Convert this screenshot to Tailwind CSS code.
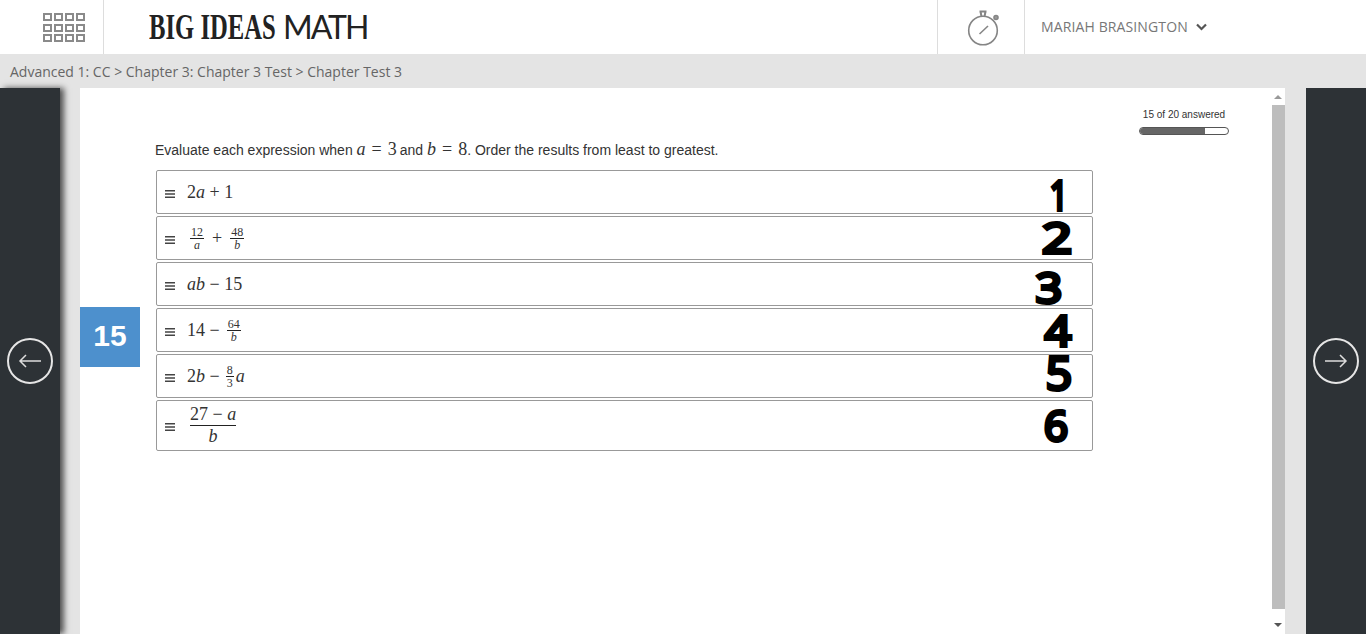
<!DOCTYPE html>
<html lang="en">
<head>
  <meta charset="UTF-8" />
  <title>Big Ideas Math - Chapter Test 3</title>
  <script src="https://cdn.jsdelivr.net/npm/@tailwindcss/browser@4"></script>
</head>
<body class="h-screen overflow-hidden flex flex-col bg-[#e4e4e4] font-['Open_Sans',sans-serif]">

  <!-- top bar -->
  <header class="h-[54px] bg-white flex items-stretch shrink-0">
    <div class="w-[104px] border-r border-[#dddddd] pl-[43px] pt-[13px]">
      <div class="grid grid-cols-[repeat(4,9px)] grid-rows-[repeat(3,8px)] gap-x-[2px] gap-y-[2.5px]">
        <div class="border-2 border-[#8a8a8a]"></div><div class="border-2 border-[#8a8a8a]"></div><div class="border-2 border-[#8a8a8a]"></div><div class="border-2 border-[#8a8a8a]"></div>
        <div class="border-2 border-[#8a8a8a]"></div><div class="border-2 border-[#8a8a8a]"></div><div class="border-2 border-[#8a8a8a]"></div><div class="border-2 border-[#8a8a8a]"></div>
        <div class="border-2 border-[#8a8a8a]"></div><div class="border-2 border-[#8a8a8a]"></div><div class="border-2 border-[#8a8a8a]"></div><div class="border-2 border-[#8a8a8a]"></div>
      </div>
    </div>
    <div class="flex-1 flex items-center pl-[45px]">
      <span class="w-[134px] whitespace-nowrap origin-left scale-x-[0.685] font-['Liberation_Serif',serif] font-bold text-[36px] leading-none text-[#222222]">BIG IDEAS</span>
      <span class="whitespace-nowrap font-['Lato',sans-serif] font-normal text-[32px] leading-none text-[#222222] tracking-[-2px]">MATH</span>
    </div>
    <div class="w-[88px] border-x border-[#dddddd] flex items-center justify-center">
      <svg class="ml-[5px]" width="34" height="38" viewBox="0 0 34 38" fill="none" stroke="#858585" stroke-width="1.6">
        <circle cx="16" cy="22.5" r="14.3" />
        <path d="M12.5 3.5h7M13.5 3.5l1 5M18.5 3.5l-1 5" stroke-width="2" />
        <circle cx="29" cy="9.5" r="2" fill="#999999" />
        <path d="M12.5 26l8.5-8" />
      </svg>
    </div>
    <div class="w-[341px] flex items-center pl-[16px] pb-[1px] gap-[8px] text-[14px] tracking-[0.12px] text-[#777777]">
      <span>MARIAH BRASINGTON</span>
      <svg width="11" height="8" viewBox="0 0 11 8" fill="none" stroke="#555555" stroke-width="2.2"><path d="M1 1.5l4.5 4.5 4.5-4.5" /></svg>
    </div>
  </header>

  <!-- breadcrumb -->
  <div class="h-[34px] shrink-0 flex items-center pl-[10px] text-[14px] text-[#666666]">
    Advanced 1: CC &gt; Chapter 3: Chapter 3 Test &gt; Chapter Test 3
  </div>

  <main class="flex-1 flex min-h-0">
    <!-- previous -->
    <div class="w-[60px] bg-[#2d3236] shadow-[4px_0_6px_rgba(0,0,0,0.65)] flex items-center justify-center shrink-0">
      <div class="w-[46px] h-[46px] rounded-full border-2 border-[#e6e6e6] flex items-center justify-center">
        <svg width="24" height="16" viewBox="0 0 24 16" fill="none" stroke="#dddddd" stroke-width="1.5"><path d="M23 8H2M8 2L2 8l6 6" /></svg>
      </div>
    </div>
    <div class="w-[20px] shrink-0"></div>

    <!-- question -->
    <section class="relative flex-1 bg-white font-['Liberation_Sans',sans-serif] text-[#333333]">
      <div class="absolute left-0 top-[219px] w-[60px] h-[60px] pb-[3px] bg-[#4d90cd] text-white font-bold text-[30px] flex items-center justify-center">15</div>

      <div class="absolute right-[41px] top-[20px] w-[90px] flex flex-col items-center gap-[6px]">
        <span class="text-[10px] leading-[13px] whitespace-nowrap">15 of 20 answered</span>
        <div class="w-full h-[8px] border border-[#555555] rounded-full overflow-hidden"><div class="h-full w-[74%] bg-[#666666]"></div></div>
      </div>

      <div class="pl-[75px] pt-[51px] w-[1013px]">
        <p class="text-[14px] leading-[20px] h-[31px] flex items-baseline whitespace-pre">Evaluate each expression when <span class="font-['Liberation_Serif',serif] text-[18px] mr-[3px]"><i>a</i><span class="mx-[6px]">=</span>3</span>and <span class="font-['Liberation_Serif',serif] text-[18px]"><i>b</i><span class="mx-[6px]">=</span>8</span>. Order the results from least to greatest.</p>

        <div class="ml-px flex flex-col gap-[2px] font-['Liberation_Serif',serif] text-[18px] text-[#333333]">
          <div class="h-[44px] border border-[#999999] rounded-[2px] flex items-center pl-[8px] pr-[16px]">
            <svg class="mr-[12px] mt-[3px]" width="10" height="8" viewBox="0 0 10 8" fill="#444444"><path d="M0 0h10v1.4H0zM0 3.3h10v1.4H0zM0 6.6h10V8H0z" /></svg>
            <span class="whitespace-pre">2<i>a</i> + 1</span>
            <span class="ml-auto mr-[2px] w-[30px] text-center translate-y-[3px] scale-x-[0.8] font-['Open_Sans',sans-serif] text-[40px] leading-[30px] text-black [-webkit-text-stroke:4px_black]">1</span>
          </div>

          <div class="h-[44px] border border-[#999999] rounded-[2px] flex items-center pl-[8px] pr-[16px]">
            <svg class="mr-[15px] mt-[3px]" width="10" height="8" viewBox="0 0 10 8" fill="#444444"><path d="M0 0h10v1.4H0zM0 3.3h10v1.4H0zM0 6.6h10V8H0z" /></svg>
            <span class="inline-flex flex-col items-center text-[12px] leading-[12px]"><span class="border-b border-[#222222] px-px">12</span><i>a</i></span>
            <span class="mx-[8px]">+</span>
            <span class="inline-flex flex-col items-center text-[12px] leading-[12px]"><span class="border-b border-[#222222] px-px">48</span><i>b</i></span>
            <span class="ml-auto mr-[4px] w-[30px] text-center -translate-y-[1px] scale-x-[1.25] font-['Open_Sans',sans-serif] text-[42px] leading-[30px] text-black [-webkit-text-stroke:4px_black]">2</span>
          </div>

          <div class="h-[44px] border border-[#999999] rounded-[2px] flex items-center pl-[8px] pr-[16px]">
            <svg class="mr-[12px] mt-[3px]" width="10" height="8" viewBox="0 0 10 8" fill="#444444"><path d="M0 0h10v1.4H0zM0 3.3h10v1.4H0zM0 6.6h10V8H0z" /></svg>
            <span class="whitespace-pre"><i>ab</i> − 15</span>
            <span class="ml-auto mr-[12px] w-[30px] text-center translate-y-[3px] scale-x-[1.1] font-['Open_Sans',sans-serif] text-[42px] leading-[30px] text-black [-webkit-text-stroke:4px_black]">3</span>
          </div>

          <div class="h-[44px] border border-[#999999] rounded-[2px] flex items-center pl-[8px] pr-[16px]">
            <svg class="mr-[12px] mt-[3px]" width="10" height="8" viewBox="0 0 10 8" fill="#444444"><path d="M0 0h10v1.4H0zM0 3.3h10v1.4H0zM0 6.6h10V8H0z" /></svg>
            <span class="whitespace-pre">14 −</span>
            <span class="ml-[7px] inline-flex flex-col items-center text-[12px] leading-[12px]"><span class="border-b border-[#222222] px-px">64</span><i>b</i></span>
            <span class="ml-auto mr-[3px] w-[30px] text-center scale-x-[1.1] font-['Open_Sans',sans-serif] text-[42px] leading-[30px] text-black [-webkit-text-stroke:4px_black]">4</span>
          </div>

          <div class="h-[44px] border border-[#999999] rounded-[2px] flex items-center pl-[8px] pr-[16px]">
            <svg class="mr-[12px] mt-[3px]" width="10" height="8" viewBox="0 0 10 8" fill="#444444"><path d="M0 0h10v1.4H0zM0 3.3h10v1.4H0zM0 6.6h10V8H0z" /></svg>
            <span class="whitespace-pre">2<i>b</i> −</span>
            <span class="mr-[2px] ml-[6px] inline-flex flex-col items-center text-[12px] leading-[12px]"><span class="border-b border-[#222222] px-px">8</span>3</span>
            <i>a</i>
            <span class="ml-auto mr-[2px] w-[30px] text-center -translate-y-[4px] font-['Open_Sans',sans-serif] text-[46px] leading-[30px] text-black [-webkit-text-stroke:4px_black]">5</span>
          </div>

          <div class="h-[51px] border border-[#999999] rounded-[2px] flex items-center pl-[8px] pr-[16px]">
            <svg class="mr-[15px] mt-[3px]" width="10" height="8" viewBox="0 0 10 8" fill="#444444"><path d="M0 0h10v1.4H0zM0 3.3h10v1.4H0zM0 6.6h10V8H0z" /></svg>
            <span class="inline-flex flex-col items-center text-[18px] leading-[21px]"><span class="border-b border-[#222222] whitespace-pre">27 − <i>a</i></span><i>b</i></span>
            <span class="ml-auto mr-[5px] w-[30px] text-center -translate-y-[1px] font-['Open_Sans',sans-serif] text-[42px] leading-[30px] text-black [-webkit-text-stroke:4px_black]">6</span>
          </div>
        </div>
      </div>
    </section>

    <!-- scrollbar -->
    <div class="w-[15px] shrink-0 bg-white flex flex-col items-center">
      <div class="h-[17px] flex items-center justify-center"><div class="w-0 h-0 border-x-[4px] border-x-transparent border-b-[4px] border-b-[#999999]"></div></div>
      <div class="flex-1 w-[13px] ml-px bg-[#bdbdbd]"></div>
      <div class="h-[25px] flex items-end justify-center pb-[7px]"><div class="w-0 h-0 border-x-[4px] border-x-transparent border-t-[4px] border-t-[#555555]"></div></div>
    </div>
    <div class="w-[21px] shrink-0"></div>

    <!-- next -->
    <div class="w-[60px] bg-[#2d3236] flex items-center justify-center shrink-0">
      <div class="w-[46px] h-[46px] rounded-full border-2 border-[#e6e6e6] flex items-center justify-center">
        <svg width="24" height="16" viewBox="0 0 24 16" fill="none" stroke="#dddddd" stroke-width="1.5"><path d="M1 8h21M16 2l6 6-6 6" /></svg>
      </div>
    </div>
  </main>
</body>
</html>
